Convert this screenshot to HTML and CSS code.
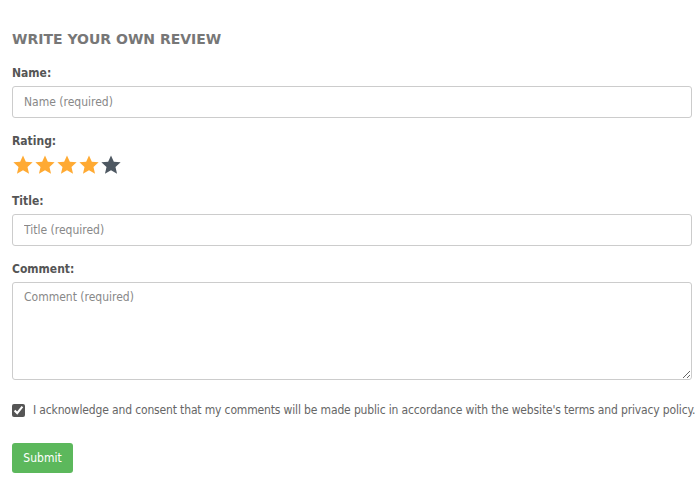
FILE: index.html
```html
<!DOCTYPE html>
<html>
<head>
<meta charset="utf-8">
<link rel="stylesheet" href="styles.css">
</head>
<body>
<form class="review">
  <h2 class="review-title">WRITE YOUR OWN REVIEW</h2>
  <div class="field">
    <label class="label">Name:</label>
    <input class="input" type="text" placeholder="Name (required)">
  </div>
  <div class="field">
    <label class="label">Rating:</label>
    <div class="stars">
      <svg class="star on" viewBox="0 0 24 24"><path d="M12 1.5l3.1 6.9 7.4.7-5.6 5 1.7 7.4L12 17.6l-6.6 3.9 1.7-7.4-5.6-5 7.4-.7z"/></svg>
      <svg class="star on" viewBox="0 0 24 24"><path d="M12 1.5l3.1 6.9 7.4.7-5.6 5 1.7 7.4L12 17.6l-6.6 3.9 1.7-7.4-5.6-5 7.4-.7z"/></svg>
      <svg class="star on" viewBox="0 0 24 24"><path d="M12 1.5l3.1 6.9 7.4.7-5.6 5 1.7 7.4L12 17.6l-6.6 3.9 1.7-7.4-5.6-5 7.4-.7z"/></svg>
      <svg class="star on" viewBox="0 0 24 24"><path d="M12 1.5l3.1 6.9 7.4.7-5.6 5 1.7 7.4L12 17.6l-6.6 3.9 1.7-7.4-5.6-5 7.4-.7z"/></svg>
      <svg class="star off" viewBox="0 0 24 24"><path d="M12 1.5l3.1 6.9 7.4.7-5.6 5 1.7 7.4L12 17.6l-6.6 3.9 1.7-7.4-5.6-5 7.4-.7z"/></svg>
    </div>
  </div>
  <div class="field">
    <label class="label">Title:</label>
    <input class="input" type="text" placeholder="Title (required)">
  </div>
  <div class="field">
    <label class="label">Comment:</label>
    <textarea class="input textarea" placeholder="Comment (required)"></textarea>
  </div>
  <label class="consent">
    <input class="check" type="checkbox" checked>
    <span>I acknowledge and consent that my comments will be made public in accordance with the website's terms and privacy policy.</span>
  </label>
  <button class="submit" type="button">Submit</button>
</form>
</body>
</html>
```

FILE: styles.css
```css
html, body {
  margin: 0;
  padding: 0;
  background: #fff;
}
body {
  font-family: "DejaVu Sans Condensed", "DejaVu Sans", sans-serif;
  color: #555;
}
.review {
  padding: 30px 8px 0 12px;
  display: flex;
  flex-direction: column;
}
.review-title {
  margin: 0 0 17px;
  font-family: "DejaVu Sans", sans-serif;
  font-size: 14px;
  line-height: 18px;
  font-weight: bold;
  color: #777;
}
.field {
  display: flex;
  flex-direction: column;
  margin-bottom: 15px;
}
.label {
  font-size: 12px;
  font-weight: bold;
  line-height: 16px;
  color: #555;
  margin-bottom: 5px;
}
.input {
  box-sizing: border-box;
  width: 680px;
  height: 32px;
  border: 1px solid #ccc;
  border-radius: 3px;
  padding: 0 11px;
  font-family: inherit;
  font-size: 12px;
  color: #555;
  background: #fff;
  outline: none;
}
.input::placeholder {
  color: #888;
}
.textarea {
  height: 98px;
  padding-top: 7px;
  resize: vertical;
}
.stars {
  display: flex;
  height: 24px;
  align-items: flex-start;
}
.star {
  width: 22px;
  height: 22px;
  flex: none;
}
.star.on { fill: #ffaa33; }
.star.off { fill: #4e5862; }
.consent {
  display: flex;
  align-items: center;
  gap: 8px;
  margin-top: 8px;
  font-size: 12px;
  line-height: 15px;
  letter-spacing: -0.15px;
  color: #666;
  white-space: nowrap;
}
.check {
  margin: 0;
  width: 13px;
  height: 13px;
  accent-color: #555;
}
.submit {
  margin-top: 25px;
  align-self: flex-start;
  width: 61px;
  height: 30px;
  border: none;
  border-radius: 3px;
  background: #5cb85c;
  color: #fff;
  font-family: inherit;
  font-size: 12px;
  padding: 0;
}
```
